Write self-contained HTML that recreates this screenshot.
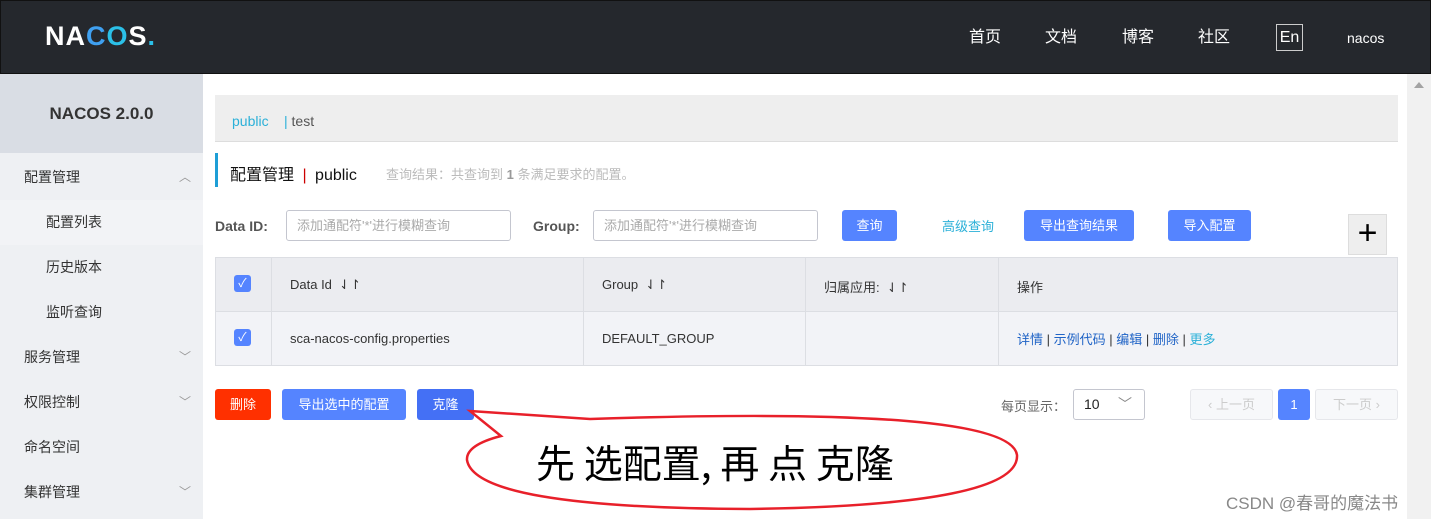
<!DOCTYPE html>
<html><head><meta charset="utf-8"><style>
*{margin:0;padding:0;box-sizing:border-box}
body{width:1431px;height:519px;overflow:hidden;position:relative;background:#fff;font-family:"Liberation Sans","Noto Sans CJK SC",sans-serif;font-size:13px;color:#333}
.abs{position:absolute}
.top{left:0;top:0;width:1431px;height:74px;background:#25282d;border:1px solid #111}
.nav{top:26px;color:#fff;font-size:16px;line-height:24px}
.side{left:0;top:74px;width:203px;height:445px;background:#eef0f3}
.sidehd{left:0;top:74px;width:203px;height:79px;background:#d9dde4;font-weight:bold;font-size:17px;text-align:center;line-height:79px}
.mi{left:0;width:203px;height:45px;line-height:45px;font-size:14px;color:#333;padding-left:24px}
.sub{padding-left:46px;background:#f2f3f6}
.chev{position:absolute;right:12px;top:0;color:#999;font-size:12px}
.btn{height:31px;line-height:31px;color:#fff;background:#5584ff;border-radius:3px;text-align:center;font-size:13px}
.inp{height:31px;border:1px solid #c4c6cf;border-radius:3px;color:#aaa;line-height:29px;padding-left:10px;font-size:13px}
.cb{width:17px;height:17px;background:#5584ff;border-radius:3px;color:#fff;font-size:12px;text-align:center;line-height:17px}
.link{color:#1f63c6}
</style></head><body>
<div class="abs top"></div>
<div class="abs" style="left:45px;top:21px;font-size:27px;font-weight:bold;color:#fff;letter-spacing:1px;line-height:30px">NA<span style="color:#3fa0f0">C</span><span style="color:#2bc0e8">O</span>S<span style="color:#2bc0e8">.</span></div>
<div class="abs nav" style="left:969px">首页</div>
<div class="abs nav" style="left:1045px">文档</div>
<div class="abs nav" style="left:1122px">博客</div>
<div class="abs nav" style="left:1198px">社区</div>
<div class="abs" style="left:1276px;top:24px;width:27px;height:27px;border:1px solid #ccc;color:#fff;font-size:16px;text-align:center;line-height:25px">En</div>
<div class="abs" style="left:1347px;top:30px;color:#fff;font-size:14px">nacos</div>

<div class="abs side"></div>
<div class="abs sidehd">NACOS 2.0.0</div>
<div class="abs mi" style="top:155px">配置管理<span class="chev">︿</span></div>
<div class="abs mi sub" style="top:200px">配置列表</div>
<div class="abs mi" style="top:245px;padding-left:46px">历史版本</div>
<div class="abs mi" style="top:290px;padding-left:46px">监听查询</div>
<div class="abs mi" style="top:335px">服务管理<span class="chev">﹀</span></div>
<div class="abs mi" style="top:380px">权限控制<span class="chev">﹀</span></div>
<div class="abs mi" style="top:425px">命名空间</div>
<div class="abs mi" style="top:470px">集群管理<span class="chev">﹀</span></div>

<div class="abs" style="left:1407px;top:74px;width:24px;height:445px;background:#f1f1f1"></div>
<div class="abs" style="left:1414px;top:82px;width:0;height:0;border-left:5px solid transparent;border-right:5px solid transparent;border-bottom:6px solid #a3a3a3"></div>

<div class="abs" style="left:215px;top:95px;width:1183px;height:47px;background:#eee;border-bottom:1px solid #ddd"></div>
<div class="abs" style="left:232px;top:113px;font-size:14px;color:#2bb0d8">public</div>
<div class="abs" style="left:284px;top:113px;font-size:14px;color:#555"><span style="color:#2bb0d8">|</span> test</div>

<div class="abs" style="left:215px;top:153px;width:3px;height:34px;background:#1e9ed6"></div>
<div class="abs" style="left:230px;top:161px;font-size:16px;color:#111">配置管理 <span style="color:#c00;margin:0 4px">|</span> public</div>
<div class="abs" style="left:386px;top:164px;font-size:13px;color:#bbb">查询结果：共查询到 <b style="color:#999">1</b> 条满足要求的配置。</div>

<div class="abs" style="left:215px;top:218px;font-size:14px;font-weight:bold;color:#555">Data ID:</div>
<div class="abs inp" style="left:286px;top:210px;width:225px">添加通配符'*'进行模糊查询</div>
<div class="abs" style="left:533px;top:218px;font-size:14px;font-weight:bold;color:#555">Group:</div>
<div class="abs inp" style="left:593px;top:210px;width:225px">添加通配符'*'进行模糊查询</div>
<div class="abs btn" style="left:842px;top:210px;width:55px">查询</div>
<div class="abs" style="left:942px;top:216px;color:#2bb0d8">高级查询</div>
<div class="abs btn" style="left:1024px;top:210px;width:110px">导出查询结果</div>
<div class="abs btn" style="left:1168px;top:210px;width:83px">导入配置</div>
<div class="abs" style="left:1348px;top:214px;width:39px;height:41px;background:#eee;border:1px solid #ddd;font-size:34px;line-height:36px;text-align:center;color:#000">+</div>

<div class="abs" style="left:215px;top:257px;width:1183px;height:109px;border:1px solid #dcdee3;background:#f2f3f7"></div>
<div class="abs" style="left:216px;top:258px;width:1181px;height:54px;background:#ebecf0;border-bottom:1px solid #dcdee3"></div>
<div class="abs" style="left:271px;top:258px;width:1px;height:107px;background:#dcdee3"></div>
<div class="abs" style="left:583px;top:258px;width:1px;height:107px;background:#dcdee3"></div>
<div class="abs" style="left:805px;top:258px;width:1px;height:107px;background:#dcdee3"></div>
<div class="abs" style="left:998px;top:258px;width:1px;height:107px;background:#dcdee3"></div>
<div class="abs cb" style="left:234px;top:275px">✓</div>
<div class="abs cb" style="left:234px;top:329px">✓</div>
<div class="abs" style="left:290px;top:277px">Data Id &nbsp;⇃↾</div>
<div class="abs" style="left:602px;top:277px">Group &nbsp;⇃↾</div>
<div class="abs" style="left:824px;top:277px">归属应用: &nbsp;⇃↾</div>
<div class="abs" style="left:1017px;top:277px">操作</div>
<div class="abs" style="left:290px;top:331px">sca-nacos-config.properties</div>
<div class="abs" style="left:602px;top:331px">DEFAULT_GROUP</div>
<div class="abs" style="left:1017px;top:329px"><span class="link">详情</span> | <span class="link">示例代码</span> | <span class="link">编辑</span> | <span class="link">删除</span> | <span style="color:#2bb0d8">更多</span></div>

<div class="abs btn" style="left:215px;top:389px;width:56px;background:#ff3000">删除</div>
<div class="abs btn" style="left:282px;top:389px;width:124px">导出选中的配置</div>
<div class="abs btn" style="left:417px;top:389px;width:57px;background:#4470f5">克隆</div>

<div class="abs" style="left:1001px;top:396px;color:#666">每页显示：</div>
<div class="abs" style="left:1073px;top:389px;width:72px;height:31px;border:1px solid #c4c6cf;border-radius:3px;line-height:29px;padding-left:10px;font-size:14px;color:#222">10<span style="position:absolute;right:12px;color:#888">﹀</span></div>
<div class="abs" style="left:1190px;top:389px;width:83px;height:31px;border:1px solid #e6e7eb;background:#f7f8fa;border-radius:3px;color:#ccc;line-height:29px;text-align:center;font-size:13px">‹ 上一页</div>
<div class="abs btn" style="left:1278px;top:389px;width:32px">1</div>
<div class="abs" style="left:1315px;top:389px;width:83px;height:31px;border:1px solid #e6e7eb;background:#f7f8fa;border-radius:3px;color:#ccc;line-height:29px;text-align:center;font-size:13px">下一页 ›</div>

<svg class="abs" style="left:0;top:0" width="1431" height="519">
<path d="M470 411 L590 419 Q 1010 405 1017 455 Q 1020 505 750 509 Q 475 508 467 460 Q 466 445 501 436 Z" fill="#fff" stroke="#e8202a" stroke-width="2.5"/>
</svg>
<div class="abs" style="left:536px;top:437px;font-size:39px;color:#000;font-family:'Noto Sans CJK SC',sans-serif;line-height:50px;white-space:nowrap">先 选配置, 再 点 克隆</div>
<div class="abs" style="left:1226px;top:489px;font-size:17px;color:#888">CSDN @春哥的魔法书</div>
</body></html>
